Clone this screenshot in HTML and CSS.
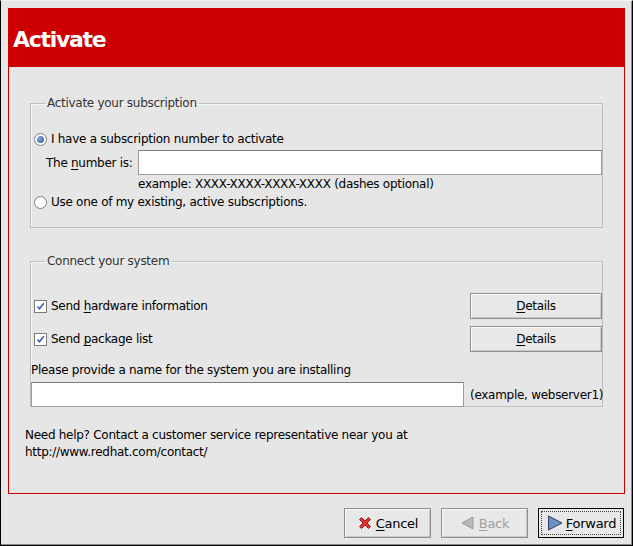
FILE: index.html
```html
<!DOCTYPE html>
<html>
<head>
<meta charset="utf-8">
<link rel="stylesheet" href="styles.css">
</head>
<body>
<div class="window">
  <div class="panel">
    <div class="header">Activate</div>
    <div class="content">
      <fieldset class="frame frame-sub">
        <legend>Activate your subscription</legend>
        <div class="row radio-row">
          <span class="radio on"></span><span>I have a subscription number to activate</span>
        </div>
        <div class="row number-row">
          <span class="num-label">The <u>n</u>umber is:</span>
          <span class="entry entry-num"></span>
        </div>
        <div class="example">example: XXXX-XXXX-XXXX-XXXX (dashes optional)</div>
        <div class="row radio-row">
          <span class="radio"></span><span>Use one of my existing, active subscriptions.</span>
        </div>
      </fieldset>

      <fieldset class="frame frame-sys">
        <legend>Connect your system</legend>
        <div class="row check-row first">
          <span class="check"><svg width="9" height="9" viewBox="0 0 9 9"><path d="M1.5 4.5 L3.5 6.8 L7.8 1.2" fill="none" stroke="#3d5fa8" stroke-width="1.6"/></svg></span>
          <span class="check-label">Send <u>h</u>ardware information</span>
          <span class="button details"><u>D</u>etails</span>
        </div>
        <div class="row check-row">
          <span class="check"><svg width="9" height="9" viewBox="0 0 9 9"><path d="M1.5 4.5 L3.5 6.8 L7.8 1.2" fill="none" stroke="#3d5fa8" stroke-width="1.6"/></svg></span>
          <span class="check-label">Send <u>p</u>ackage list</span>
          <span class="button details"><u>D</u>etails</span>
        </div>
        <div class="name-label">Please provide a name for the system you are installing</div>
        <div class="row name-row">
          <span class="entry entry-name"></span>
          <span class="name-hint">(example, webserver1)</span>
        </div>
      </fieldset>

      <p class="help">Need help? Contact a customer service representative near you at<br>http://www.redhat.com/contact/</p>
    </div>
  </div>
  <div class="buttons">
    <span class="button action">
      <svg width="16" height="16" viewBox="0 0 16 16"><path d="M2.5 4.5 L4.5 2.5 L8 6 L11.5 2.5 L13.5 4.5 L10 8 L13.5 11.5 L11.5 13.5 L8 10 L4.5 13.5 L2.5 11.5 L6 8 Z" fill="#e03030" stroke="#8c1010" stroke-width="0.9" stroke-linejoin="round"/></svg>
      <span><u>C</u>ancel</span>
    </span>
    <span class="button action disabled">
      <svg width="16" height="16" viewBox="0 0 16 16"><path d="M13 2 L13 14 L2 8 Z" fill="#b8b8b8" stroke="#9a9a9a" stroke-width="1"/></svg>
      <span><u>B</u>ack</span>
    </span>
    <span class="button action default">
      <span class="focus">
        <svg width="18" height="18" viewBox="0 0 18 18"><path d="M2.5 2 L2.5 16 L16 9 Z" fill="#6f8fc0" stroke="#2c3f66" stroke-width="1"/></svg>
        <span><u>F</u>orward</span>
      </span>
    </span>
  </div>
</div>
</body>
</html>
```
FILE: styles.css
```css
html, body {
  margin: 0;
  padding: 0;
  background: #e6e6e6;
}
body {
  font-family: "DejaVu Sans", "Liberation Sans", sans-serif;
  font-size: 12px;
  letter-spacing: -0.28px;
  color: #000;
}
.window {
  width: 633px;
  height: 546px;
  box-sizing: border-box;
  border-left: 1px solid #000;
  border-top: 1px solid #f4f4f4;
  border-right: 1px solid #000;
  border-bottom: 1px solid #000;
  box-shadow: inset -1px -1px 0 #8c8c8c;
  padding: 7px 7px 0 7px;
  display: flex;
  flex-direction: column;
}
.panel {
  height: 486px;
  box-sizing: border-box;
  border: 1px solid #cc0000;
  display: flex;
  flex-direction: column;
}
.header {
  background: #cc0000;
  height: 58px;
  box-sizing: border-box;
  color: #fff;
  font-weight: bold;
  font-size: 22px;
  letter-spacing: -1.3px;
  line-height: 58px;
  padding: 2px 0 0 4px;
  flex: none;
}
.content {
  padding: 29px 21px 0 21px;
}
.frame {
  margin: 0;
  padding: 0 0 0 3px;
  border: 1px solid #bdbdbd;
  box-shadow: inset 1px 1px 0 #f6f6f6;
  min-width: 0;
}
.frame legend {
  margin-left: 11px;
  padding: 0 2px;
  color: #333;
  line-height: 14px;
}
.frame-sys legend {
  margin-left: 14px;
}
.row {
  display: flex;
  align-items: center;
}
.frame-sub {
  height: 132px;
  box-sizing: border-box;
  padding-top: 22px;
}
.radio-row {
  height: 14px;
  gap: 4px;
}
.radio {
  width: 11px;
  height: 11px;
  border: 1px solid #7c7c7c;
  border-radius: 50%;
  background: #fff;
  position: relative;
  flex: none;
}
.radio.on::after {
  content: "";
  position: absolute;
  left: 2px;
  top: 2px;
  width: 7px;
  height: 7px;
  border-radius: 50%;
  background: radial-gradient(circle at 35% 35%, #8aa6dc, #2c4f9c);
}
.number-row {
  margin-top: 4px;
  height: 25px;
}
.num-label {
  width: 104px;
  padding-left: 12px;
  box-sizing: border-box;
  flex: none;
}
.entry {
  display: block;
  background: #fff;
  border: 1px solid #9c9c9c;
  border-top-color: #7c7c7c;
  box-sizing: border-box;
}
.entry-num {
  flex: 1;
  height: 25px;
}
.example {
  padding-left: 104px;
  height: 18px;
  line-height: 18px;
}
.frame-sub .radio-row:last-child {
  margin-top: 2px;
}
.frame-sys {
  margin-top: 26px;
  height: 153px;
  box-sizing: border-box;
  padding: 25px 0 0 0;
}
.check-row {
  height: 26px;
  padding-left: 3px;
}
.check-row + .check-row {
  margin-top: 7px;
}
.check {
  width: 11px;
  height: 11px;
  border: 1px solid #7c7c7c;
  background: #fff;
  display: flex;
  align-items: center;
  justify-content: center;
  flex: none;
  margin-right: 4px;
}
.check-label {
  flex: 1;
}
.button {
  display: flex;
  align-items: center;
  justify-content: center;
  box-sizing: border-box;
  background: #e8e8e8;
  border: 1px solid #8e8e8e;
  box-shadow: inset 1px 1px 0 #fbfbfb, inset -1px -1px 0 #c8c8c8;
}
.details {
  width: 132px;
  height: 26px;
  flex: none;
}
.name-label {
  margin-top: 9px;
  height: 18px;
  line-height: 18px;
}
.name-row {
  margin-top: 3px;
  height: 25px;
}
.entry-name {
  width: 433px;
  height: 25px;
  flex: none;
}
.name-hint {
  margin-left: 6px;
  white-space: nowrap;
}
.help {
  margin: 20px 0 0 -5px;
  line-height: 17px;
}
.buttons {
  display: flex;
  justify-content: flex-end;
  gap: 10px;
  padding-top: 14px;
  padding-right: 1px;
}
.action {
  width: 87px;
  height: 30px;
  gap: 3px;
  font-size: 13px;
}
.action.disabled {
  color: #a0a0a0;
}
.action.default {
  border: 1px solid #000;
  box-shadow: none;
  padding: 2px;
  width: 86px;
}
.focus {
  flex: 1;
  align-self: stretch;
  display: flex;
  align-items: center;
  justify-content: center;
  gap: 2px;
  border: 1px dotted #444;
}
u {
  text-decoration: underline;
  text-underline-offset: 2px;
}
```
